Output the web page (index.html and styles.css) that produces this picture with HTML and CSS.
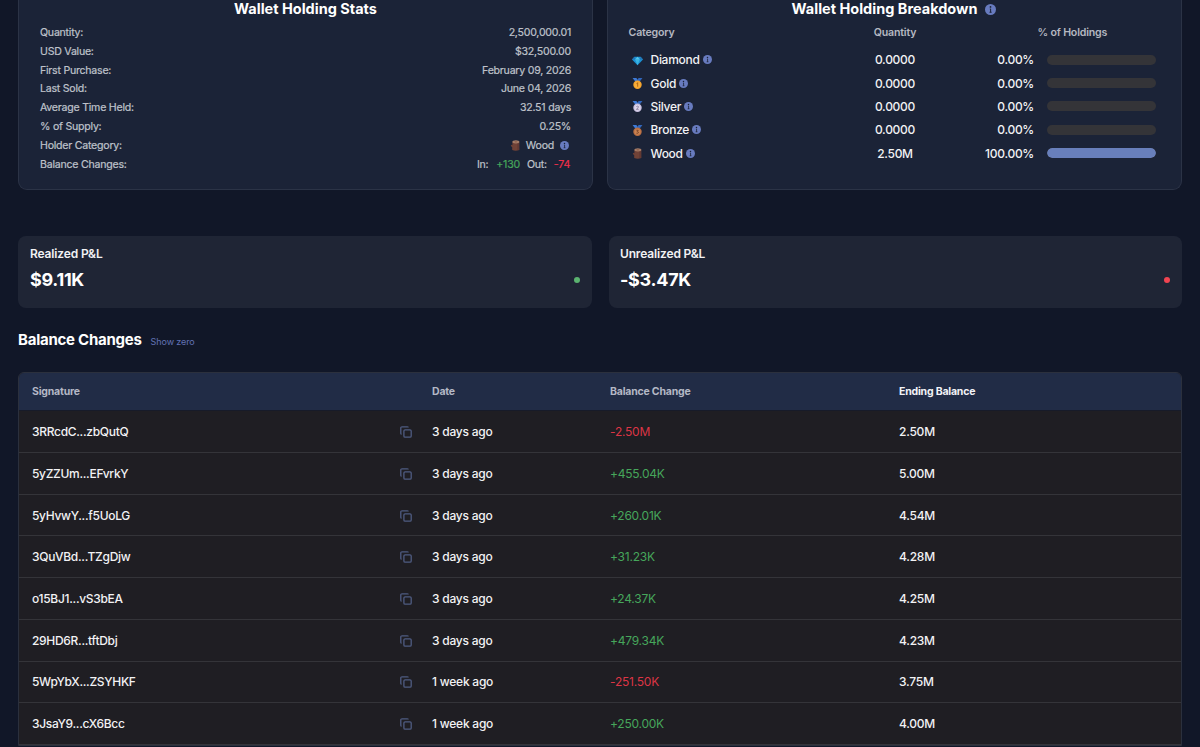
FILE: index.html
```html
<!DOCTYPE html>
<html lang="en">
<head>
  <meta charset="UTF-8" />
  <title>Wallet Holding Stats</title>
  <link rel="stylesheet" href="styles.css">
</head>
<body>
  <svg class="sprite" width="0" height="0">
    <symbol id="info" viewBox="0 0 10 10">
      <circle cx="5" cy="5" r="5" fill="#687bbf"/>
      <circle cx="5" cy="2.7" r=".8" fill="#1b2337"/>
      <path d="M4.4 4.5h.7v3M4.1 7.5h1.9" fill="none" stroke="#1b2337" stroke-width=".9"/>
    </symbol>
    <symbol id="copy" viewBox="0 0 12 12">
      <rect x="3.9" y="3.9" width="7.3" height="7.3" rx="1.2" fill="none" stroke="#4f5c82" stroke-width="1.3"/>
      <path d="M1.6 8.2Q.8 8.2.8 7.1V2Q.8.8 2 .8h5.1q1.1 0 1.1.8" fill="none" stroke="#4f5c82" stroke-width="1.3"/>
    </symbol>
    <symbol id="diamond" viewBox="0 0 12 12">
      <path d="M2.6 2h6.8L12 5 6 11.2 0 5z" fill="#1b91d3"/>
      <path d="M2.6 2L0 5h3.5zM9.4 2L12 5H8.5z" fill="#2474b5"/>
      <path d="M3.5 5h5L6 11.2z" fill="#39b4e3"/>
      <path d="M6 2L3.5 5h5z" fill="#5ac8ea"/>
    </symbol>
    <symbol id="ribbon" viewBox="0 0 12 12">
      <path d="M.6 0h4.2L8 4.5H4.2z" fill="#3e7bd8"/>
      <path d="M11.4 0H7.2L4 4.5h3.8z" fill="#3267bd"/>
    </symbol>
    <symbol id="gold" viewBox="0 0 12 12">
      <use href="#ribbon"/>
      <circle cx="6" cy="7.4" r="4.6" fill="#f6a42c"/>
      <circle cx="6" cy="7.4" r="3.2" fill="#f8ae3b"/>
      <path d="M5 6.3l1.2-.8v4" fill="none" stroke="#b56812" stroke-width="1.1"/>
    </symbol>
    <symbol id="silver" viewBox="0 0 12 12">
      <use href="#ribbon"/>
      <circle cx="6" cy="7.4" r="4.6" fill="#c9c0df"/>
      <circle cx="6" cy="7.4" r="3.2" fill="#ddd6ea"/>
      <path d="M4.8 6.1q1.2-.9 2.2 0 .4 1-2.2 3h2.5" fill="none" stroke="#827696" stroke-width=".9"/>
    </symbol>
    <symbol id="bronze" viewBox="0 0 12 12">
      <use href="#ribbon"/>
      <circle cx="6" cy="7.4" r="4.6" fill="#b96e43"/>
      <circle cx="6" cy="7.4" r="3.2" fill="#c98250"/>
      <path d="M4.8 5.7h2L5.7 7.1q1.7.2 1.2 1.5-.8 1-2.1.3" fill="none" stroke="#713c24" stroke-width=".9"/>
    </symbol>
    <symbol id="wood" viewBox="0 0 12 12">
      <path d="M2.6 1.8h7.6v9.2q-4 1.2-7.8 0V8L.8 6.2l.8-1 1 .6z" fill="#704237"/>
      <path d="M8.8 3.5v7.5" stroke="#593331"/>
      <ellipse cx="6.4" cy="2" rx="3.8" ry="1.8" fill="#a57d68"/>
      <ellipse cx="6.4" cy="2" rx="1.6" ry=".7" fill="#8b5a47"/>
    </symbol>
  </svg>

  <div class="container">
    <div class="panels">
      <section class="panel">
        <h2>Wallet Holding Stats</h2>
        <dl class="stats">
          <div><dt>Quantity:</dt><dd>2,500,000.01</dd></div>
          <div><dt>USD Value:</dt><dd>$32,500.00</dd></div>
          <div><dt>First Purchase:</dt><dd>February 09, 2026</dd></div>
          <div><dt>Last Sold:</dt><dd>June 04, 2026</dd></div>
          <div><dt>Average Time Held:</dt><dd>32.51 days</dd></div>
          <div><dt>% of Supply:</dt><dd>0.25%</dd></div>
          <div><dt>Holder Category:</dt><dd class="holder"><svg class="emoji"><use href="#wood"/></svg><span>Wood</span><svg class="info"><use href="#info"/></svg></dd></div>
          <div><dt>Balance Changes:</dt><dd class="flows"><span>In:</span><span class="up">+130</span><span class="out">Out:</span><span class="down">-74</span></dd></div>
        </dl>
      </section>

      <section class="panel">
        <h2>Wallet Holding Breakdown <svg class="info info-large"><use href="#info"/></svg></h2>
        <div class="breakdown">
          <div class="tier tier-head"><span>Category</span><span class="qty">Quantity</span><span class="share-head">% of Holdings</span></div>
          <div class="tier"><div class="name"><svg class="emoji"><use href="#diamond"/></svg>Diamond<svg class="info"><use href="#info"/></svg></div><span class="qty">0.0000</span><span class="pct">0.00%</span><div class="bar"></div></div>
          <div class="tier"><div class="name"><svg class="emoji"><use href="#gold"/></svg>Gold<svg class="info"><use href="#info"/></svg></div><span class="qty">0.0000</span><span class="pct">0.00%</span><div class="bar"></div></div>
          <div class="tier"><div class="name"><svg class="emoji"><use href="#silver"/></svg>Silver<svg class="info"><use href="#info"/></svg></div><span class="qty">0.0000</span><span class="pct">0.00%</span><div class="bar"></div></div>
          <div class="tier"><div class="name"><svg class="emoji"><use href="#bronze"/></svg>Bronze<svg class="info"><use href="#info"/></svg></div><span class="qty">0.0000</span><span class="pct">0.00%</span><div class="bar"></div></div>
          <div class="tier"><div class="name"><svg class="emoji"><use href="#wood"/></svg>Wood<svg class="info"><use href="#info"/></svg></div><span class="qty">2.50M</span><span class="pct">100.00%</span><div class="bar"><div class="fill" style="width: 100%"></div></div></div>
        </div>
      </section>
    </div>

    <div class="pnl">
      <div class="pnl-card">
        <h3>Realized P&amp;L</h3>
        <div class="pnl-value">$9.11K <i class="dot dot-green"></i></div>
      </div>
      <div class="pnl-card">
        <h3>Unrealized P&amp;L</h3>
        <div class="pnl-value">-$3.47K <i class="dot dot-red"></i></div>
      </div>
    </div>

    <div class="heading">
      <h2>Balance Changes</h2>
      <a class="show-zero">Show zero</a>
    </div>

    <div class="table">
      <div class="row row-head"><span>Signature</span><span>Date</span><span>Balance Change</span><span class="ending">Ending Balance</span></div>
      <div class="row"><div class="sig">3RRcdC...zbQutQ<svg class="copy"><use href="#copy"/></svg></div><span>3 days ago</span><span class="down">-2.50M</span><span>2.50M</span></div>
      <div class="row"><div class="sig">5yZZUm...EFvrkY<svg class="copy"><use href="#copy"/></svg></div><span>3 days ago</span><span class="up">+455.04K</span><span>5.00M</span></div>
      <div class="row"><div class="sig">5yHvwY...f5UoLG<svg class="copy"><use href="#copy"/></svg></div><span>3 days ago</span><span class="up">+260.01K</span><span>4.54M</span></div>
      <div class="row"><div class="sig">3QuVBd...TZgDjw<svg class="copy"><use href="#copy"/></svg></div><span>3 days ago</span><span class="up">+31.23K</span><span>4.28M</span></div>
      <div class="row"><div class="sig">o15BJ1...vS3bEA<svg class="copy"><use href="#copy"/></svg></div><span>3 days ago</span><span class="up">+24.37K</span><span>4.25M</span></div>
      <div class="row"><div class="sig">29HD6R...tftDbj<svg class="copy"><use href="#copy"/></svg></div><span>3 days ago</span><span class="up">+479.34K</span><span>4.23M</span></div>
      <div class="row"><div class="sig">5WpYbX...ZSYHKF<svg class="copy"><use href="#copy"/></svg></div><span>1 week ago</span><span class="down">-251.50K</span><span>3.75M</span></div>
      <div class="row"><div class="sig">3JsaY9...cX6Bcc<svg class="copy"><use href="#copy"/></svg></div><span>1 week ago</span><span class="up">+250.00K</span><span>4.00M</span></div>
    </div>
  </div>
</body>
</html>
```
FILE: styles.css
```css
* {
  box-sizing: border-box;
}
body {
  margin: 0;
  height: 747px;
  overflow: hidden;
  background: #111728;
  color: #f2f2f4;
  font-family: Inter, sans-serif;
  font-size: 12px;
}
h2, h3, dl, dd {
  margin: 0;
}
.sprite {
  display: none;
}
.container {
  height: 747px;
  padding: 0 18px;
  overflow: hidden;
}
.panels {
  display: grid;
  grid-template-columns: 575px 575px;
  gap: 14px;
}
.panel {
  height: 190px;
  padding: 0 20px;
  background: #1b2337;
  border: 1px solid #2b3346;
  border-top: 0;
  border-radius: 0 0 9px 9px;
}
.panel h2 {
  display: flex;
  justify-content: center;
  align-items: center;
  height: 16px;
  font-size: 14.5px;
  font-weight: 700;
  color: #fff;
}
.stats {
  padding: 7px 1px 0 1px;
  color: #bfc2ca;
  font-size: 10.6px;
  letter-spacing: -0.24px;
}
.stats > div {
  display: flex;
  justify-content: space-between;
  align-items: center;
  height: 18.85px;
}
.stats dt, .stats dd {
  -webkit-text-stroke: 0.2px currentColor;
}
.holder, .flows {
  display: flex;
  align-items: center;
}
.holder .emoji {
  margin-right: 5px;
}
.holder .info {
  margin: 1px 2px 0 6px;
}
.flows {
  padding-right: 1px;
}
.flows .up {
  margin: 0 7px 0 8px;
}
.flows .down {
  margin-left: 7px;
}
.emoji {
  width: 11px;
  height: 11px;
}
.info {
  width: 9px;
  height: 9px;
}
.info-large {
  width: 11px;
  height: 11px;
  margin: 2px 1px 0 8px;
}
.up {
  color: #46a65b;
}
.down {
  color: #dc3545;
}
.flows .down {
  color: #f0304a;
}

.breakdown {
  padding: 6px 0 0 0.5px;
}
.tier {
  display: grid;
  grid-template-columns: 201px 131px 73.5px 109px;
  align-items: center;
  height: 23.35px;
  font-weight: 500;
  letter-spacing: -0.28px;
}
.tier-head {
  height: 26px;
  padding-bottom: 5px;
  font-size: 10.6px;
  font-weight: 600;
  letter-spacing: -0.18px;
  color: #b5b8c1;
}
.name {
  display: flex;
  align-items: center;
  padding-left: 3px;
}
.name .emoji {
  margin: 1px 8px 0 0;
}
.name .info {
  margin-left: 3px;
}
.qty {
  text-align: center;
}
.pct {
  text-align: right;
}
.share-head {
  grid-column: 3 / 5;
  padding-left: 77px;
}
.bar {
  width: 109px;
  height: 10px;
  margin-left: 13px;
  border-radius: 5px;
  background: #343438;
  overflow: hidden;
}
.fill {
  height: 100%;
  border-radius: 5px;
  background: #687fbb;
}

.pnl {
  display: grid;
  grid-template-columns: 574px 573px;
  gap: 17px;
  margin-top: 46px;
}
.pnl-card {
  height: 72px;
  padding: 10px 12px 0 12px;
  background: #1f2535;
  border-radius: 8px;
}
.pnl-card + .pnl-card {
  padding-left: 11px;
}
.pnl-card h3 {
  font-size: 12px;
  line-height: 16px;
  font-weight: 600;
  letter-spacing: -0.15px;
}
.pnl-value {
  display: flex;
  justify-content: space-between;
  align-items: center;
  height: 35px;
  font-size: 18px;
  font-weight: 700;
  letter-spacing: -0.3px;
  color: #fff;
}
.dot {
  width: 6px;
  height: 6px;
  margin-top: 1px;
  border-radius: 50%;
}
.dot-green {
  background: #5bb370;
}
.dot-red {
  background: #f04451;
}

.heading {
  display: flex;
  align-items: center;
  height: 64px;
  padding-bottom: 1px;
}
.heading h2 {
  font-size: 15px;
  font-weight: 700;
  letter-spacing: -0.25px;
  color: #fff;
}
.show-zero {
  margin: 4px 0 0 9px;
  font-size: 9px;
  letter-spacing: -0.1px;
  color: #6273b5;
}

.table {
  width: 1164px;
  background: #1f1e23;
  border: 1px solid #2b303d;
  border-radius: 6px 6px 0 0;
  overflow: hidden;
}
.row {
  display: grid;
  grid-template-columns: 400px 178px 289px 1fr;
  align-items: center;
  height: 41.7px;
  padding-left: 13px;
  border-bottom: 1px solid #343439;
  font-weight: 500;
  letter-spacing: -0.23px;
}
.row-head {
  height: 38.4px;
  padding-bottom: 1px;
  background: #212c46;
  border-bottom: 1px solid #171b29;
  font-size: 10.5px;
  font-weight: 700;
  letter-spacing: -0.2px;
  color: #b4b8c5;
}
.ending {
  color: #f2f3f7;
}
.sig {
  display: flex;
  justify-content: space-between;
  align-items: center;
  padding-right: 20px;
  letter-spacing: -0.3px;
}
.copy {
  width: 12px;
  height: 12px;
  margin-top: 1px;
}
.row .up, .row .down {
  font-weight: 400;
}
```
